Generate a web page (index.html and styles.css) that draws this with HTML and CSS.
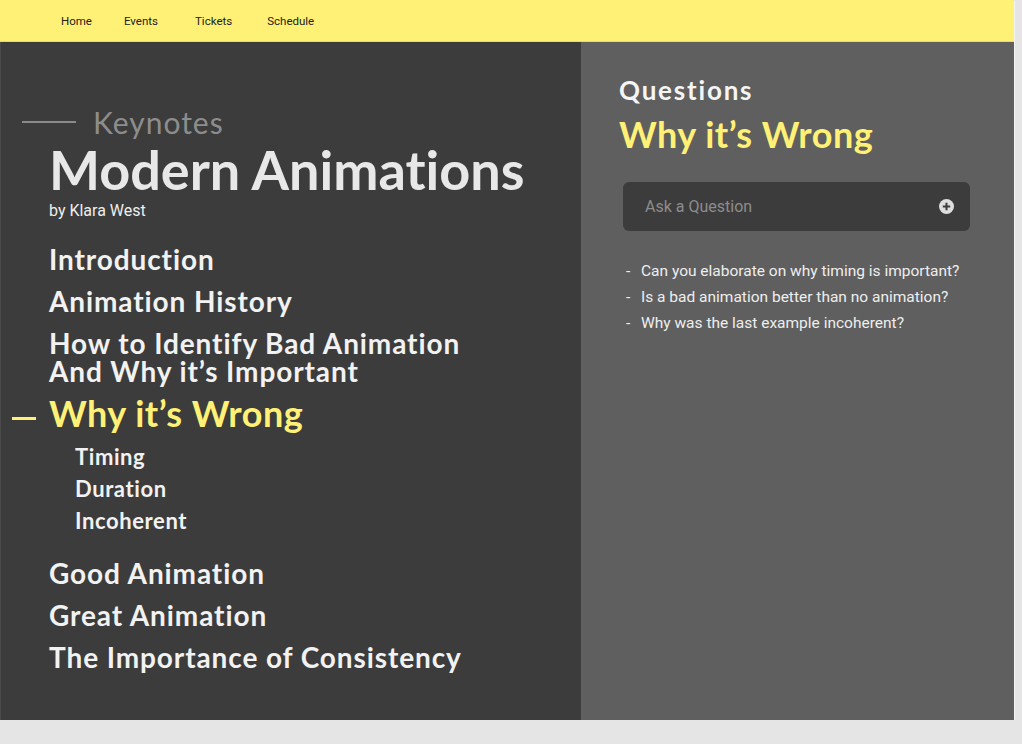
FILE: index.html
```html
<!DOCTYPE html>
<html lang="en">
<head>
<meta charset="utf-8">
<title>Modern Animations</title>
<link rel="stylesheet" href="styles.css">
</head>
<body>
<div class="app">
  <nav class="nav">
    <a class="nav-link" href="#">Home</a>
    <a class="nav-link" href="#">Events</a>
    <a class="nav-link" href="#">Tickets</a>
    <a class="nav-link" href="#">Schedule</a>
  </nav>
  <div class="content">
    <section class="talk">
      <div class="eyebrow"><span class="eyebrow-line"></span><span class="eyebrow-text">Keynotes</span></div>
      <h1 class="title">Modern Animations</h1>
      <p class="author">by Klara West</p>
      <ul class="outline">
        <li class="topic">Introduction</li>
        <li class="topic">Animation History</li>
        <li class="topic topic-two">How to Identify Bad Animation<br>And Why it’s Important</li>
        <li class="topic topic-active">Why it’s Wrong</li>
        <li class="subtopics">
          <div class="subtopic">Timing</div>
          <div class="subtopic">Duration</div>
          <div class="subtopic">Incoherent</div>
        </li>
        <li class="topic topic-after">Good Animation</li>
        <li class="topic">Great Animation</li>
        <li class="topic">The Importance of Consistency</li>
      </ul>
    </section>
    <aside class="questions">
      <h2 class="q-heading">Questions</h2>
      <h3 class="q-topic">Why it’s Wrong</h3>
      <div class="ask">
        <span class="ask-placeholder">Ask a Question</span>
        <svg class="ask-icon" width="15" height="15" viewBox="0 0 15 15" aria-hidden="true">
          <circle cx="7.5" cy="7.5" r="7.5" fill="#dedede"/>
          <path d="M7.5 3.8v7.4M3.8 7.5h7.4" stroke="#3c3c3c" stroke-width="2" stroke-linecap="butt"/>
        </svg>
      </div>
      <ul class="q-list">
        <li class="q-item"><span class="q-dash">-</span>Can you elaborate on why timing is important?</li>
        <li class="q-item"><span class="q-dash">-</span>Is a bad animation better than no animation?</li>
        <li class="q-item"><span class="q-dash">-</span>Why was the last example incoherent?</li>
      </ul>
    </aside>
  </div>
</div>
</body>
</html>
```

FILE: styles.css
```css
* { box-sizing: border-box; }

html, body {
  margin: 0;
  padding: 0;
  background: #e5e5e5;
}

.app {
  width: 1014px;
  height: 720px;
  display: flex;
  flex-direction: column;
  box-shadow: 1px 1px 0 #f4f4f4;
  font-variant-ligatures: none;
}

.nav {
  height: 42px;
  flex: 0 0 42px;
  background: #fff176;
  display: flex;
  align-items: center;
  padding-left: 61px;
  gap: 32px;
  border-bottom: 1px solid #e8dc6a;
}

.nav-link {
  font-family: Roboto, "Liberation Sans", sans-serif;
  font-size: 11.5px;
  color: #222;
  text-decoration: none;
}
.nav-link:nth-child(3) { margin-left: 5px; }
.nav-link:nth-child(4) { margin-left: 3px; }

.content {
  flex: 1;
  display: flex;
  min-height: 0;
}

.talk {
  width: 581px;
  background: #3c3c3c;
  border-left: 1px solid #4a4a4a;
  padding: 62px 0 0 48px;
  position: relative;
}

.eyebrow {
  display: flex;
  align-items: center;
  height: 36px;
  margin-left: -27px;
}
.eyebrow-line {
  width: 54px;
  height: 2px;
  background: #8a8a8a;
  margin-right: 17px;
}
.eyebrow-text {
  font-family: Lato, "Noto Sans", sans-serif;
  font-size: 30px;
  line-height: 36px;
  color: #8d8d8d;
  letter-spacing: 1px;
}

.title {
  margin: 0;
  font-family: Lato, "Noto Sans", sans-serif;
  font-weight: 700;
  font-size: 54px;
  line-height: 60px;
  color: #e8e8e8;
  letter-spacing: 0;
}

.author {
  margin: 1px 0 0;
  font-family: Roboto, "Liberation Sans", sans-serif;
  font-size: 16px;
  line-height: 20px;
  color: #eeeeee;
}

.outline {
  list-style: none;
  margin: 24px 0 0;
  padding: 0;
}

.topic {
  font-family: Lato, "Noto Sans", sans-serif;
  font-weight: 700;
  font-size: 28px;
  line-height: 28px;
  color: #f2f2f2;
  letter-spacing: 0.9px;
  margin-bottom: 14px;
}

.topic-active {
  position: relative;
  font-size: 36px;
  line-height: 40px;
  color: #fff176;
  margin-top: -6px;
  margin-bottom: 8px;
  letter-spacing: 0.5px;
}
.topic-active::before {
  content: "";
  position: absolute;
  left: -37px;
  top: 24px;
  width: 24px;
  height: 3px;
  background: #fff176;
}

.subtopics {
  padding-left: 26px;
  margin-bottom: 22px;
}
.subtopic {
  font-family: Lato, "Noto Sans", sans-serif;
  font-weight: 700;
  font-size: 22px;
  line-height: 32px;
  color: #f2f2f2;
  letter-spacing: 0.6px;
}

.questions {
  flex: 1;
  background: #5f5f5f;
  padding: 33px 44px 0 38px;
}

.q-heading {
  margin: 0;
  font-family: Lato, "Noto Sans", sans-serif;
  font-weight: 700;
  font-size: 26px;
  line-height: 30px;
  color: #f5f5f5;
  letter-spacing: 1.8px;
}

.q-topic {
  margin: 9px 0 0;
  font-family: Lato, "Noto Sans", sans-serif;
  font-weight: 700;
  font-size: 36px;
  line-height: 40px;
  color: #fff176;
  letter-spacing: 0.5px;
}

.ask {
  margin: 28px 0 0 4px;
  width: 347px;
  height: 49px;
  background: #3c3c3c;
  border-radius: 6px;
  display: flex;
  align-items: center;
  justify-content: space-between;
  padding: 0 16px 0 22px;
}
.ask-placeholder {
  font-family: Roboto, "Liberation Sans", sans-serif;
  font-size: 16px;
  color: #8c8c8c;
}
.ask-icon { display: block; }

.q-list {
  list-style: none;
  margin: 27px 0 0;
  padding: 0 0 0 7px;
}
.q-item {
  font-family: Roboto, "Liberation Sans", sans-serif;
  font-size: 15.5px;
  line-height: 26px;
  color: #eeeeee;
  display: flex;
}
.q-dash {
  width: 15px;
  flex: 0 0 15px;
}
```
